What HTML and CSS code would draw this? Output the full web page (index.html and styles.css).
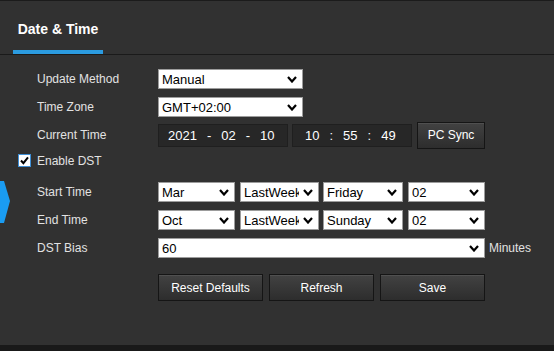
FILE: index.html
```html
<!DOCTYPE html>
<html lang="en">
<head>
  <meta charset="UTF-8">
  <title>Date &amp; Time</title>
  <link rel="stylesheet" href="styles.css">
</head>
<body>
  <div class="page">
    <header class="header">
      <div class="tab">Date &amp; Time</div>
    </header>

    <main class="form">
      <div class="row">
        <span class="label">Update Method</span>
        <div class="select w145"><span class="val">Manual</span><svg class="chev" viewBox="0 0 10 7"><path d="M1 1 L5 5.5 L9 1"/></svg></div>
      </div>
      <div class="row">
        <span class="label">Time Zone</span>
        <div class="select w145"><span class="val">GMT+02:00</span><svg class="chev" viewBox="0 0 10 7"><path d="M1 1 L5 5.5 L9 1"/></svg></div>
      </div>
      <div class="row">
        <span class="label">Current Time</span>
        <div class="field date"><span>2021</span><span>-</span><span>02</span><span>-</span><span>10</span></div>
        <div class="field time"><span>10</span><span>:</span><span>55</span><span>:</span><span>49</span></div>
        <button class="btn sync">PC Sync</button>
      </div>
      <div class="row row-check">
        <svg class="check" viewBox="0 0 13 13">
          <rect x="0.5" y="0.5" width="12" height="12" fill="#fff" stroke="#3f8fd6"/>
          <path d="M3 6.5 L5.4 9.2 L10 3.4" fill="none" stroke="#000" stroke-width="2"/>
        </svg>
        <span class="label">Enable DST</span>
      </div>
      <div class="row">
        <span class="label">Start Time</span>
        <div class="select w77"><span class="val">Mar</span><svg class="chev" viewBox="0 0 10 7"><path d="M1 1 L5 5.5 L9 1"/></svg></div>
        <div class="select w79 gap5"><span class="val">LastWeek</span><svg class="chev" viewBox="0 0 10 7"><path d="M1 1 L5 5.5 L9 1"/></svg></div>
        <div class="select w80 gap4"><span class="val">Friday</span><svg class="chev" viewBox="0 0 10 7"><path d="M1 1 L5 5.5 L9 1"/></svg></div>
        <div class="select w77 gap5"><span class="val">02</span><svg class="chev" viewBox="0 0 10 7"><path d="M1 1 L5 5.5 L9 1"/></svg></div>
      </div>
      <div class="row">
        <span class="label">End Time</span>
        <div class="select w77"><span class="val">Oct</span><svg class="chev" viewBox="0 0 10 7"><path d="M1 1 L5 5.5 L9 1"/></svg></div>
        <div class="select w79 gap5"><span class="val">LastWeek</span><svg class="chev" viewBox="0 0 10 7"><path d="M1 1 L5 5.5 L9 1"/></svg></div>
        <div class="select w80 gap4"><span class="val">Sunday</span><svg class="chev" viewBox="0 0 10 7"><path d="M1 1 L5 5.5 L9 1"/></svg></div>
        <div class="select w77 gap5"><span class="val">02</span><svg class="chev" viewBox="0 0 10 7"><path d="M1 1 L5 5.5 L9 1"/></svg></div>
      </div>
      <div class="row">
        <span class="label">DST Bias</span>
        <div class="select w327"><span class="val">60</span><svg class="chev" viewBox="0 0 10 7"><path d="M1 1 L5 5.5 L9 1"/></svg></div>
        <span class="unit">Minutes</span>
      </div>
      <div class="actions">
        <button class="btn action">Reset Defaults</button>
        <button class="btn action">Refresh</button>
        <button class="btn action">Save</button>
      </div>
    </main>

    <svg class="side-arrow" viewBox="0 0 12 44" width="12" height="44">
      <polygon points="0,0 4,0 10,20 4,42 0,42" fill="#1a9cf2"/>
    </svg>

    <footer class="bottom"></footer>
  </div>
</body>
</html>
```

FILE: styles.css
```css
body {
  margin: 0;
  font-family: 'Liberation Sans', Arial, sans-serif;
  background: #313131;
  color: #dedede;
}

.page {
  position: relative;
  height: 351px;
  box-sizing: border-box;
  border-top: 1px solid #1b1b1b;
  display: flex;
  flex-direction: column;
}

.header {
  height: 53px;
  flex: none;
  border-bottom: 1px solid #1a1a1a;
  padding-left: 13px;
  display: flex;
}

.tab {
  width: 90px;
  box-sizing: border-box;
  padding-top: 6px;
  border-bottom: 4px solid #2b9be0;
  display: flex;
  align-items: center;
  justify-content: center;
  font-size: 14px;
  font-weight: bold;
  color: #fff;
}

.form {
  flex: 1;
  padding: 10px 0 0 37px;
}

.row {
  display: flex;
  align-items: center;
  height: 28px;
}

.label {
  width: 121px;
  flex: none;
  font-size: 12px;
  color: #e2e2e2;
}

.row-check {
  height: 23px;
  margin-left: -19px;
  margin-bottom: 6px;
}

.check {
  width: 13px;
  height: 13px;
  margin-right: 6px;
  flex: none;
}

.select {
  height: 20px;
  box-sizing: border-box;
  border: 1px solid #9c9c9c;
  background: #fff;
  color: #000;
  font-size: 13px;
  padding-left: 3px;
  display: flex;
  align-items: center;
  flex: none;
}

.select .val {
  flex: 1;
  overflow: hidden;
  white-space: nowrap;
}

.chev {
  width: 10px;
  height: 7px;
  margin: 0 5px 0 4px;
  flex: none;
  fill: none;
  stroke: #000;
  stroke-width: 2.2;
}

.w145 { width: 145px; }
.w77 { width: 77px; }
.w79 { width: 79px; }
.w80 { width: 80px; }
.w327 { width: 327px; }
.gap4 { margin-left: 4px; }
.gap5 { margin-left: 5px; }

.unit {
  margin-left: 4px;
  font-size: 12px;
  color: #e2e2e2;
}

.field {
  height: 23px;
  box-sizing: border-box;
  background: #272727;
  border: 1px solid #1f1f1f;
  display: flex;
  align-items: center;
  gap: 10px;
  color: #fff;
  font-size: 13px;
}

.date {
  width: 130px;
  padding-left: 9px;
}

.time {
  width: 120px;
  margin-left: 4px;
  padding-left: 12px;
}

.btn {
  font-family: inherit;
  font-size: 12px;
  color: #fff;
  background: linear-gradient(#424242, #2d2d2d);
  border: 1px solid #151515;
  box-shadow: inset 0 1px 0 rgba(255, 255, 255, 0.08);
  padding: 0;
  cursor: pointer;
}

.sync {
  width: 68px;
  height: 27px;
  margin-left: 5px;
}

.actions {
  margin-top: 12px;
  padding-left: 121px;
  display: flex;
  gap: 6px;
}

.action {
  width: 105px;
  height: 27px;
}

.side-arrow {
  position: absolute;
  left: 0;
  top: 180px;
}

.bottom {
  height: 6px;
  flex: none;
  background: #191919;
}
```
